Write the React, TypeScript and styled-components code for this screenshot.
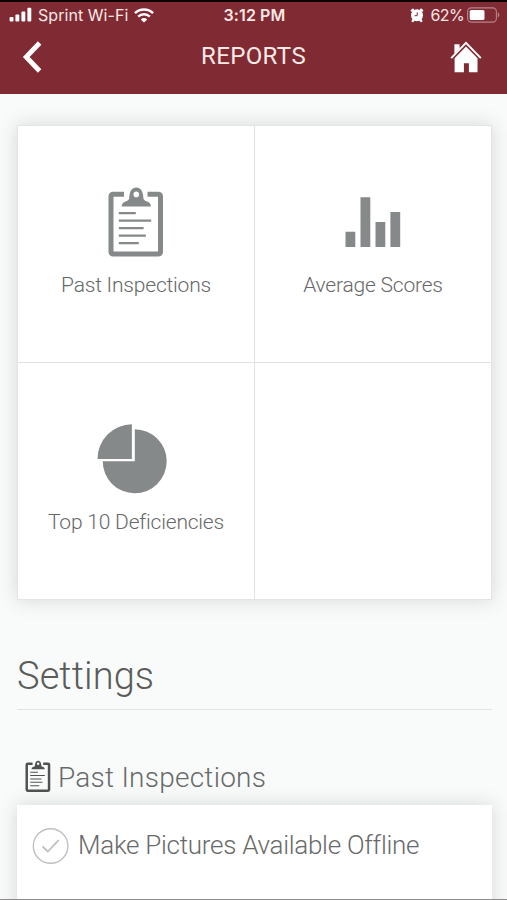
import React from 'react';
import styled, { createGlobalStyle } from 'styled-components';

const GlobalStyle = createGlobalStyle`
  * { box-sizing: border-box; }
  body {
    margin: 0;
    background: #f9fbfa;
    font-family: Roboto, 'Liberation Sans', sans-serif;
    font-weight: 300;
    overflow: hidden;
  }
`;

const Screen = styled.div`
  display: flex;
  flex-direction: column;
  width: 507px;
  height: 900px;
  overflow: hidden;
  background: #f9fbfa;
  border-top: 2px solid #0c0204;
  border-bottom: 1px solid #8b8b8b;
`;

const Header = styled.header`
  flex: none;
  height: 92px;
  background: #802a34;
  color: #fbe9e6;
`;

const StatusBar = styled.div`
  display: grid;
  grid-template-columns: 1fr auto 1fr;
  align-items: center;
  height: 26px;
  padding: 0 7px 0 9px;
  font-family: Inter, sans-serif;
  font-size: 16px;
  font-weight: 400;
  line-height: 20px;
`;

const StatusGroup = styled.div<{ $end?: boolean }>`
  display: flex;
  align-items: center;
  justify-content: ${(p) => (p.$end ? 'flex-end' : 'flex-start')};
`;

const Carrier = styled.span`
  margin: 0 6px 0 6px;
  letter-spacing: 0.05px;
`;

const Clock = styled.time`
  font-size: 16px;
  font-weight: 600;
  letter-spacing: 0.1px;
`;

const Percent = styled.span`
  margin: 0 3px 0 6px;
  font-size: 16px;
  letter-spacing: -0.6px;
`;

const NavBar = styled.div`
  display: grid;
  grid-template-columns: 1fr auto 1fr;
  align-items: center;
  height: 58px;
  padding: 0 25px 0 22px;
`;

const IconButton = styled.button<{ $end?: boolean }>`
  display: flex;
  justify-self: ${(p) => (p.$end ? 'end' : 'start')};
  padding: 0;
  border: 0;
  background: none;
  color: #fff;
`;

const Title = styled.h1`
  margin: 0 0 2px;
  padding-left: 3px;
  font-size: 24px;
  font-weight: 400;
  line-height: 28px;
  letter-spacing: 0.4px;
`;

const Content = styled.main`
  display: flex;
  flex-direction: column;
  padding: 31px 15px 0 17px;
`;

const Grid = styled.div`
  display: grid;
  grid-template-columns: 1fr 1fr;
  grid-template-rows: 236px 236px;
  gap: 1px;
  border: 1px solid #e3e5e4;
  background: #e0e2e1;
  box-shadow: 0 0 18px rgba(90, 105, 100, 0.24);
`;

const Tile = styled.div`
  display: flex;
  flex-direction: column;
  align-items: center;
  padding-top: 60px;
  background: #fff;
  color: #868989;
`;

const TileLabel = styled.span`
  margin-top: 15px;
  font-size: 21px;
  line-height: 26px;
  letter-spacing: -0.2px;
  color: #666868;
`;

const SectionTitle = styled.h2`
  margin: 50px 0 0;
  padding: 0;
  height: 60px;
  border-bottom: 1px solid #e1e4e3;
  font-size: 38px;
  font-weight: 300;
  line-height: 52px;
  letter-spacing: 0.1px;
  color: #5a5c5c;
`;

const GroupTitle = styled.h3`
  display: flex;
  align-items: center;
  gap: 7px;
  height: 36px;
  margin: 49px 0 0;
  padding-left: 8px;
  font-size: 28px;
  font-weight: 300;
  letter-spacing: 0.25px;
  color: #686a6a;

  svg {
    margin-bottom: 3px;
    color: #505252;
  }
`;

const Card = styled.section`
  height: 140px;
  margin-top: 10px;
  padding: 21px 15px;
  background: #fff;
  box-shadow: 0 0 18px rgba(90, 105, 100, 0.24);
`;

const Option = styled.label`
  display: flex;
  align-items: center;
  gap: 9px;
  height: 40px;
  font-size: 26px;
  color: #686a6a;
`;

const OptionText = styled.span`
  margin-bottom: 2px;
  letter-spacing: -0.28px;
`;

const SignalIcon = () => (
  <svg width="23" height="16" viewBox="0 0 23 16" fill="#fff">
    <rect x="0.6" y="10" width="3.9" height="4.6" rx="1" />
    <rect x="6.4" y="7.6" width="3.9" height="7" rx="1" />
    <rect x="12.4" y="4.6" width="3.9" height="10" rx="1" />
    <rect x="18.4" y="0.8" width="3.9" height="13.8" rx="1" />
  </svg>
);

const WifiIcon = () => (
  <svg width="20" height="15" viewBox="0 0 20 15" fill="none" stroke="#fff" strokeWidth="2.5">
    <path d="M1 5.1a13 13 0 0 1 18 0" />
    <path d="M4.2 8.6a8.5 8.5 0 0 1 11.6 0" />
    <path d="M10 14.5 6.8 11.5a4.7 4.7 0 0 1 6.4 0Z" fill="#fff" stroke="none" />
  </svg>
);

const AlarmIcon = () => (
  <svg width="14" height="15" viewBox="0 0 14 15">
    <g stroke="#fff" strokeWidth="2.4" strokeLinecap="round">
      <path d="M1.9 2.6 3 1.7M12.1 2.6 11 1.7M2.7 12.9l1.2-1.5M11.3 12.9l-1.2-1.5" />
    </g>
    <circle cx="7" cy="7.3" r="6" fill="#fff" />
    <path d="M7.2 4.3v3.4H4.6" fill="none" stroke="#802a34" strokeWidth="1" />
  </svg>
);

const BatteryIcon = () => (
  <svg width="33" height="16" viewBox="0 0 33 16">
    <rect x="0.6" y="0.9" width="28.8" height="14.2" rx="3.8" fill="none" stroke="#b8848a" strokeWidth="1.1" />
    <rect x="2.7" y="3" width="14.8" height="10" rx="1.6" fill="#fff" />
    <path d="M30.8 5.6c2 .8 2 4 0 4.8z" fill="#b8848a" />
  </svg>
);

const BackIcon = () => (
  <svg width="20" height="32" viewBox="0 0 20 32" fill="none" stroke="#fff" strokeWidth="4.8">
    <path d="M17.6 2 4.2 16l13.4 14" strokeLinejoin="miter" />
  </svg>
);

const HomeIcon = () => (
  <svg width="32" height="32" viewBox="0 0 32 32" fill="#fff">
    <path d="M4.4 3.2h5.2v4.3L4.4 12.7z" />
    <path d="M1.2 17.2 16 1.8l14.8 15.4" fill="none" stroke="#fff" strokeWidth="1.9" />
    <path d="M4.6 17.3 16 5.5l11.5 11.8v13.9h-8.6v-9h-5v9H4.6z" />
  </svg>
);

const ClipboardIcon = ({ width, height, frame = 5 }: { width: number; height: number; frame?: number }) => (
  <svg width={width} height={height} viewBox="0 0 56 71" fill="none" stroke="currentColor">
    <path
      d="M16 8.2H5a2 2 0 0 0-2 2V66a2 2 0 0 0 2 2h45.5a2 2 0 0 0 2-2V10.2a2 2 0 0 0-2-2H39.5"
      strokeWidth={frame}
    />
    <path
      fill="currentColor"
      stroke="none"
      fillRule="evenodd"
      d="M13.7 20.6c0-4.3 3.4-4.7 6-6 2-1.1 1.3-3.1 1.9-6 .7-3.8 2.8-7 6.7-7s6 3.2 6.7 7c.6 2.9-.1 4.9 1.9 6 2.6 1.3 6 1.7 6 6zM28.3 5.6a2.8 2.8 0 1 0 0 5.6 2.8 2.8 0 0 0 0-5.6z"
    />
    <path d="M10.8 27.2h17M10.8 34.6h32.4M10.8 42.2h24.8M10.8 49.6h27M10.8 57.1h20" strokeWidth="2.3" />
  </svg>
);

const BarsIcon = () => (
  <svg width="56" height="71" viewBox="0 0 56 71" fill="currentColor">
    <path d="M.5 45.7h9.8v15.2H.5zM15.5 11.2h9.8v49.7h-9.8zM30.5 35.9h9.8v25h-9.8zM45.4 26h9.8v34.9h-9.8z" />
  </svg>
);

const PieIcon = () => (
  <svg width="78" height="71" viewBox="0 0 78 71" fill="currentColor">
    <path d="M34.9 1.2v34.7H.5A34.6 34.6 0 0 1 34.9 1.2z" />
    <path d="M37.8 6.3a32 32 0 1 1-32.1 32h32.1z" />
  </svg>
);

const CheckIcon = () => (
  <svg width="37" height="38" viewBox="0 0 37 38" fill="none" stroke="#bfc1c1">
    <circle cx="18.6" cy="19" r="17.3" strokeWidth="1.4" />
    <path d="M10.5 19.3 15.8 24.5 26.7 13.2" strokeWidth="1.8" />
  </svg>
);

export default function App() {
  return (
    <>
      <GlobalStyle />
      <Screen>
        <Header>
          <StatusBar>
            <StatusGroup>
              <SignalIcon />
              <Carrier>Sprint Wi-Fi</Carrier>
              <WifiIcon />
            </StatusGroup>
            <Clock>3:12 PM</Clock>
            <StatusGroup $end>
              <AlarmIcon />
              <Percent>62%</Percent>
              <BatteryIcon />
            </StatusGroup>
          </StatusBar>
          <NavBar>
            <IconButton aria-label="Back">
              <BackIcon />
            </IconButton>
            <Title>REPORTS</Title>
            <IconButton $end aria-label="Home">
              <HomeIcon />
            </IconButton>
          </NavBar>
        </Header>
        <Content>
          <Grid>
            <Tile>
              <ClipboardIcon width={56} height={71} />
              <TileLabel>Past Inspections</TileLabel>
            </Tile>
            <Tile>
              <BarsIcon />
              <TileLabel>Average Scores</TileLabel>
            </Tile>
            <Tile>
              <PieIcon />
              <TileLabel>Top 10 Deficiencies</TileLabel>
            </Tile>
            <Tile />
          </Grid>
          <SectionTitle>Settings</SectionTitle>
          <GroupTitle>
            <ClipboardIcon width={26} height={32} frame={5.5} />
            Past Inspections
          </GroupTitle>
          <Card>
            <Option>
              <CheckIcon />
              <OptionText>Make Pictures Available Offline</OptionText>
            </Option>
          </Card>
        </Content>
      </Screen>
    </>
  );
}
